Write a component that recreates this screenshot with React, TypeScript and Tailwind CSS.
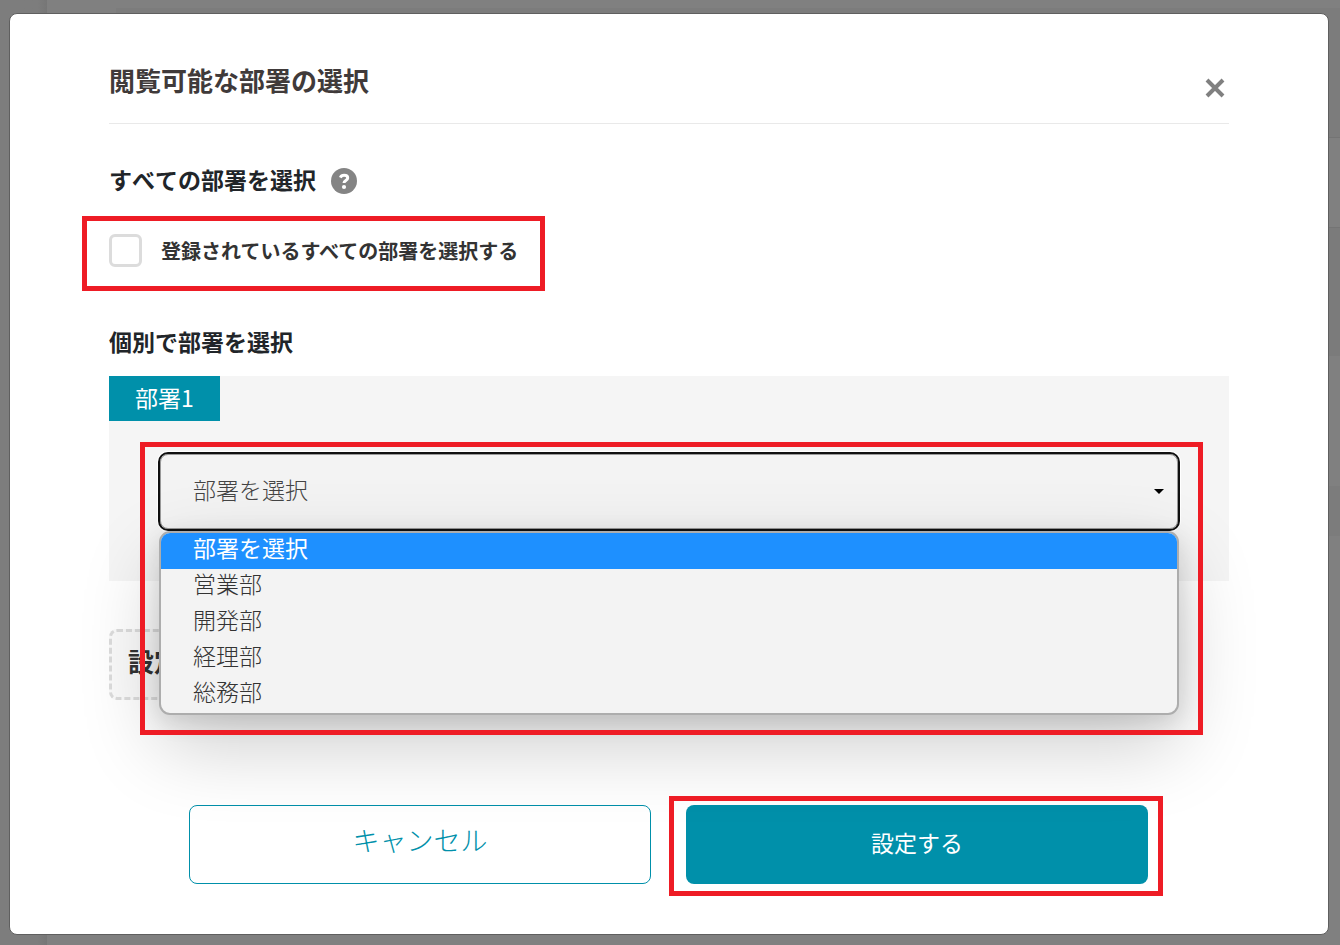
import { useState } from 'react';

const departments = ['部署を選択', '営業部', '開発部', '経理部', '総務部'];

function Highlight({ className }: { className: string }) {
  return <span aria-hidden="true" className={`pointer-events-none absolute z-20 border-5 border-[#ee1c25] ${className}`} />;
}

function Backdrop() {
  return (
    <div aria-hidden="true" className="absolute inset-0 flex bg-[#808080]">
      <div className="w-[47px] bg-linear-to-r from-[#7d7d7d] from-80% to-[#767676]" />
      <div className="flex flex-1 flex-col pt-2 pl-[69px]">
        <div className="h-[130px] border-b border-[#747474] bg-[#7c7c7c]" />
        <div className="h-[90px] border-b border-[#747474]" />
        <div className="h-[128px] bg-[#7b7b7b]" />
        <div className="h-[130px]" />
        <div className="h-[50px] bg-[#7c7c7c]" />
      </div>
    </div>
  );
}

function DepartmentSelect() {
  const [selected, setSelected] = useState(departments[0]);

  return (
    <div className="relative mx-[51px] mt-[33px]">
      <select
        aria-label="部署1"
        value={selected}
        onChange={(e) => setSelected(e.target.value)}
        className="block h-[75px] w-full appearance-none rounded-lg border border-[#999] bg-[#f3f3f3] px-8 pb-1 text-[23px] font-light text-[#444] shadow-[0_0_0_3px_#fff] outline-2 outline-[#101010]"
      >
        {departments.map((name) => (
          <option key={name}>{name}</option>
        ))}
      </select>
      <svg className="pointer-events-none absolute top-[35px] right-[14px] h-[5px] w-[10px]" viewBox="0 0 10 5">
        <path d="M0 0h10L5 5z" fill="#000" />
      </svg>

      {/* Opened list */}
      <ul
        role="listbox"
        className="absolute -inset-x-px top-full z-10 mt-0.5 overflow-hidden rounded-[11px] border-2 border-[#adadad] bg-[#f3f3f3] text-[23px] leading-[28px] font-light text-[#333] shadow-[0_30px_80px_rgba(0,0,0,0.2),0_6px_24px_rgba(0,0,0,0.12)]"
      >
        {departments.map((name) => (
          <li
            key={name}
            role="option"
            aria-selected={name === selected}
            onClick={() => setSelected(name)}
            className="px-8 pb-2 aria-selected:bg-[#1e90ff] aria-selected:font-normal aria-selected:text-white"
          >
            {name}
          </li>
        ))}
      </ul>
      <Highlight className="-top-3 -right-[25px] -left-5 h-[293px]" />
    </div>
  );
}

export default function App() {
  return (
    <div className="relative min-h-screen pt-[13px] pr-[11px] pb-[10px] pl-[9px] font-['Noto_Sans_CJK_JP',sans-serif] [font-kerning:none]">
      <Backdrop />
      <main
        role="dialog"
        aria-labelledby="dialog-title"
        className="relative rounded-lg border border-[#5f5f5f] bg-white px-[99px] pb-[50px]"
      >
        <header className="flex items-start justify-between border-b border-[#e9e9e9] pt-[46px] pb-[21px]">
          <h1 id="dialog-title" className="text-[26px] leading-[40px] font-bold text-[#403a3a]">
            閲覧可能な部署の選択
          </h1>
          <button type="button" aria-label="閉じる" className="mt-[14px] flex size-7 items-center justify-center">
            <svg className="size-5" viewBox="0 0 20 20" fill="none" stroke="#808080" strokeWidth="4">
              <path d="M2 2l16 16M18 2L2 18" />
            </svg>
          </button>
        </header>

        {/* All departments */}
        <section>
          <div className="mt-[41px] flex items-center">
            <h2 className="pb-1 text-[23px] leading-[28px] font-bold text-[#212529]">すべての部署を選択</h2>
            <svg className="ml-[15px] size-[26px]" viewBox="0 0 26 26" fill="none">
              <circle cx="13" cy="13" r="13" fill="#848484" />
              <path
                d="M9.4 9.6c.6-1.5 1.9-2.3 3.7-2.3 2.2 0 3.6 1 3.6 2.7 0 2.6-3.7 2.5-3.7 5"
                stroke="#fff"
                strokeWidth="3"
              />
              <circle cx="13" cy="19" r="2.1" fill="#fff" />
            </svg>
          </div>
          <label className="relative mt-[37px] flex h-[33px] w-fit items-center">
            <input type="checkbox" className="size-[33px] appearance-none rounded-md border-3 border-[#dcdcdc] bg-white checked:bg-[#0090aa]" />
            <span className="ml-[19px] text-[20px] leading-[28px] font-bold text-[#333] [font-kerning:auto]">登録されているすべての部署を選択する</span>
            <Highlight className="-top-[18px] -right-[27px] -bottom-6 -left-[27px]" />
          </label>
        </section>

        {/* Individual departments */}
        <section>
          <h2 className="mt-[60px] pb-1 text-[23px] leading-[28px] font-bold text-[#212529]">個別で部署を選択</h2>
          <div className="mt-[17px] bg-[#f5f5f5] pb-[52px]">
            <div className="flex h-[45px] w-[111px] items-center justify-center bg-[#0090aa] pb-1 text-[23px] leading-[28px] text-white">
              部署1
            </div>
            <DepartmentSelect />
          </div>
          <button
            type="button"
            className="mt-12 block h-[71px] w-[320px] rounded-lg border-3 border-dashed border-[#dcdcdc] bg-[#fafafa] px-4 pb-2 text-left text-[26px] font-bold text-[#333]"
          >
            設定
          </button>
        </section>

        <div className="mt-[105px] grid grid-cols-2 gap-[35px] pr-[81px] pl-20">
          <button type="button" className="h-[79px] rounded-lg border border-[#0090aa] bg-white pb-2 text-[27px] font-light text-[#0090aa]">
            キャンセル
          </button>
          <div className="relative">
            <button type="button" className="h-[79px] w-full rounded-lg bg-[#0090aa] pb-1 text-[23px] text-white">
              設定する
            </button>
            <Highlight className="-top-[9px] -right-[15px] -bottom-3 -left-[17px]" />
          </div>
        </div>
      </main>
    </div>
  );
}
